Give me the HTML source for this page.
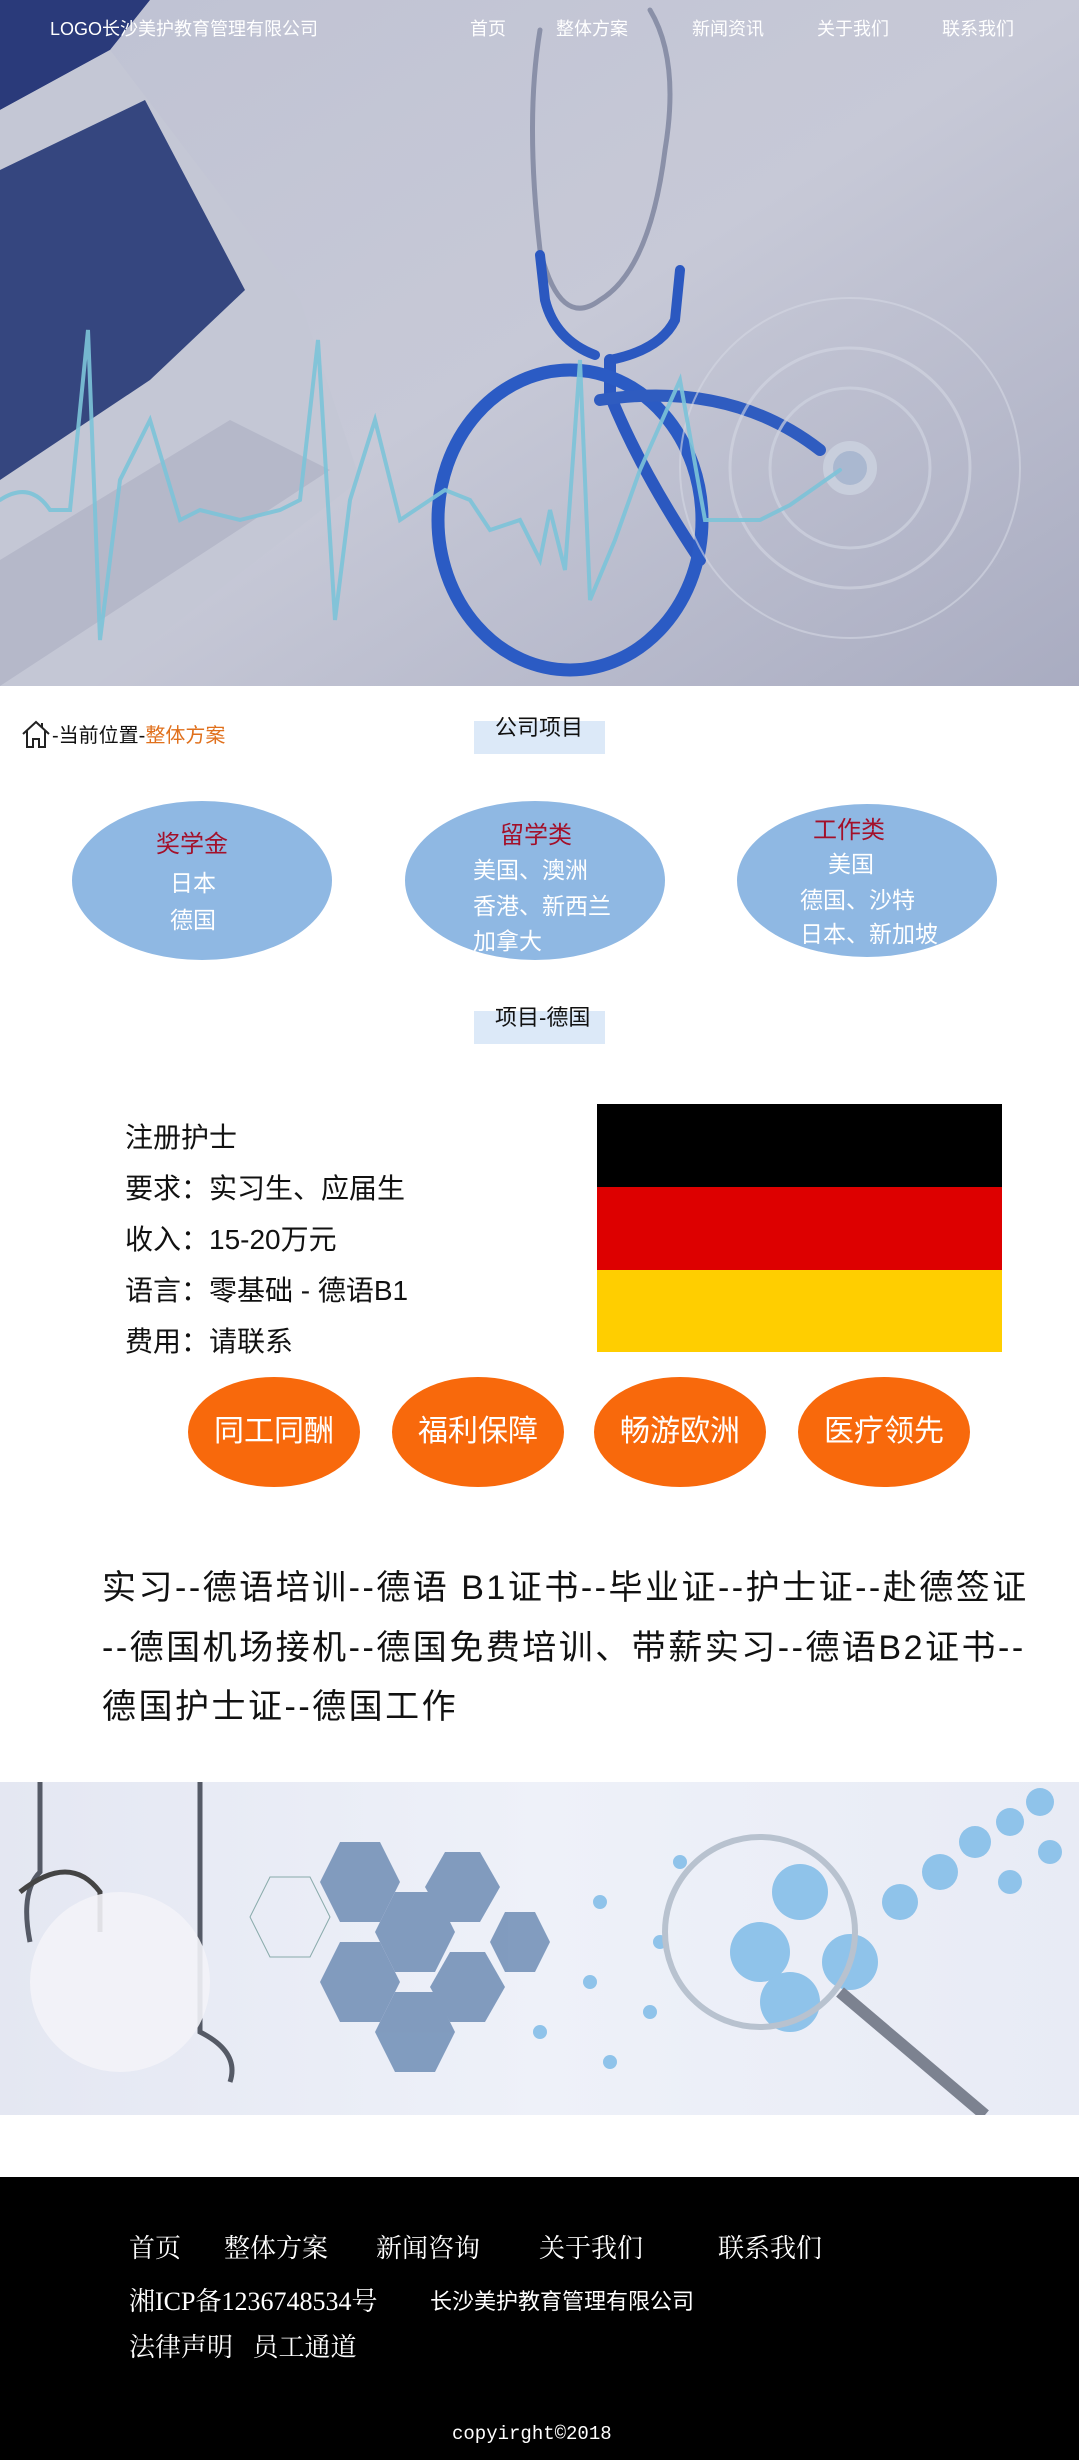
<!DOCTYPE html>
<html><head><meta charset="utf-8"><style>
*{margin:0;padding:0;box-sizing:border-box}
body{width:1079px;height:2460px;position:relative;background:#fff;font-family:"Liberation Sans","Noto Sans CJK SC",sans-serif;overflow:hidden}
.a{position:absolute;white-space:nowrap}
.nav{color:#fff;font-size:18px;top:15px}
.ell{position:absolute;background:#8fb8e3;border-radius:50%}
.t{color:#a3102a;font-size:24px}
.w{color:#fff;font-size:23px}
.box{position:absolute;background:#dce9f8;width:131px;height:33px}
.info{left:125px;font-size:28px;color:#111}
.oc{position:absolute;top:1377px;width:172px;height:110px;border-radius:50%;background:#f8690c;color:#fff;font-size:30px;text-align:center;line-height:110px}
.para{left:102px;font-size:34px;letter-spacing:2.5px;color:#111}
.ft{color:#fff;font-size:26px;font-family:"Liberation Serif","Noto Serif CJK SC",serif}
</style></head><body>
<!-- hero -->
<svg class="a" style="left:0;top:0" width="1079" height="686" viewBox="0 0 1079 686">
<defs><linearGradient id="bg" x1="0" y1="0" x2="1" y2="1"><stop offset="0" stop-color="#bfc2d3"/><stop offset="0.5" stop-color="#c7c9d7"/><stop offset="1" stop-color="#a9acc1"/></linearGradient></defs>
<rect width="1079" height="686" fill="url(#bg)"/>
<polygon points="0,0 150,0 110,50 0,110" fill="#2a3a7a"/>
<polygon points="0,110 110,50 300,300 360,480 0,760" fill="#c4c7d5"/>
<polygon points="0,170 145,100 245,290 150,380 0,480" fill="#35467f"/>
<polygon points="0,560 230,420 330,470 0,686" fill="#b5b8c9"/>
<g fill="none" stroke-linecap="round">
<path d="M540 30 Q525 120 540 250 Q560 330 600 300 Q650 270 665 150 Q680 60 650 10" stroke="#8a90a8" stroke-width="5"/>
<path d="M540 255 L545 300 Q555 340 595 355" stroke="#2b58c0" stroke-width="10"/>
<path d="M680 270 L675 320 Q660 350 610 360" stroke="#2b58c0" stroke-width="10"/>
<path d="M610 360 L610 395 Q640 470 700 560" stroke="#2b58c0" stroke-width="12"/>
<ellipse cx="570" cy="520" rx="132" ry="150" stroke="#2b5bc4" stroke-width="13"/>
<path d="M600 400 Q730 380 820 450" stroke="#2f5cc0" stroke-width="12"/>
<circle cx="850" cy="468" r="22" stroke="#c8cedc" stroke-width="10" fill="#aab8d0"/>
<circle cx="850" cy="468" r="80" stroke="#cfd3e0" stroke-width="3" opacity=".7"/>
<circle cx="850" cy="468" r="120" stroke="#d4d7e3" stroke-width="3" opacity=".6"/>
<circle cx="850" cy="468" r="170" stroke="#d4d7e3" stroke-width="2" opacity=".6"/>
<path d="M0 500 Q30 480 50 510 L70 510 L88 330 L100 640 L120 480 L150 420 L180 520 L200 510 L240 520 L280 510 L300 500 L318 340 L335 620 L350 500 L375 420 L400 520 L430 500 L445 490 L470 500 L490 530 L520 520 L540 560 L550 510 L565 570 L580 360 L590 600 L615 540 L640 470 L680 380 L705 520 L760 520 L790 505 L840 470" stroke="#7cc3d8" stroke-width="4" opacity=".9"/>
</g>
</svg>
<div class="a nav" style="left:50px">LOGO长沙美护教育管理有限公司</div>
<div class="a nav" style="left:470px">首页</div>
<div class="a nav" style="left:556px">整体方案</div>
<div class="a nav" style="left:692px">新闻资讯</div>
<div class="a nav" style="left:817px">关于我们</div>
<div class="a nav" style="left:942px">联系我们</div>

<!-- breadcrumb -->
<svg class="a" style="left:20px;top:718px" width="32" height="32" viewBox="0 0 32 32"><path d="M3 16 L16 4 L29 16 M7 13 V29 H13 V21 H19 V29 H25 V13 M22 5 V9" fill="none" stroke="#222" stroke-width="2"/></svg>
<div class="a" style="left:52px;top:719px;font-size:20px;color:#111">-当前位置-<span style="color:#e0701c">整体方案</span></div>

<div class="box" style="left:474px;top:721px"></div>
<div class="a" style="left:495px;top:710px;font-size:22px;color:#111">公司项目</div>

<div class="ell" style="left:72px;top:801px;width:260px;height:159px"></div>
<div class="ell" style="left:405px;top:801px;width:260px;height:159px"></div>
<div class="ell" style="left:737px;top:804px;width:260px;height:153px"></div>
<div class="a t" style="left:156px;top:824px">奖学金</div>
<div class="a w" style="left:170px;top:864px">日本</div>
<div class="a w" style="left:170px;top:901px">德国</div>
<div class="a t" style="left:500px;top:815px">留学类</div>
<div class="a w" style="left:473px;top:851px">美国、澳洲</div>
<div class="a w" style="left:473px;top:887px">香港、新西兰</div>
<div class="a w" style="left:473px;top:922px">加拿大</div>
<div class="a t" style="left:813px;top:810px">工作类</div>
<div class="a w" style="left:828px;top:845px">美国</div>
<div class="a w" style="left:800px;top:881px">德国、沙特</div>
<div class="a w" style="left:800px;top:915px">日本、新加坡</div>

<div class="box" style="left:474px;top:1011px"></div>
<div class="a" style="left:495px;top:1000px;font-size:22px;color:#111">项目-德国</div>

<div class="a info" style="top:1116px">注册护士</div>
<div class="a info" style="top:1167px">要求：实习生、应届生</div>
<div class="a info" style="top:1218px">收入：15-20万元</div>
<div class="a info" style="top:1269px">语言：零基础 - 德语B1</div>
<div class="a info" style="top:1320px">费用：请联系</div>

<div class="a" style="left:597px;top:1104px;width:405px;height:83px;background:#000"></div>
<div class="a" style="left:597px;top:1187px;width:405px;height:83px;background:#dd0000"></div>
<div class="a" style="left:597px;top:1270px;width:405px;height:82px;background:#ffce00"></div>

<div class="oc" style="left:188px">同工同酬</div>
<div class="oc" style="left:392px">福利保障</div>
<div class="oc" style="left:594px">畅游欧洲</div>
<div class="oc" style="left:798px">医疗领先</div>

<div class="a para" style="top:1560px">实习--德语培训--德语 B1证书--毕业证--护士证--赴德签证</div>
<div class="a para" style="top:1620px">--德国机场接机--德国免费培训、带薪实习--德语B2证书--</div>
<div class="a para" style="top:1679px">德国护士证--德国工作</div>

<!-- lower image -->
<svg class="a" style="left:0;top:1782px" width="1079" height="333" viewBox="0 0 1079 333">
<defs><linearGradient id="g2" x1="0" x2="1"><stop offset="0" stop-color="#e4e7f2"/><stop offset=".5" stop-color="#eef1f9"/><stop offset="1" stop-color="#e8ebf5"/></linearGradient></defs>
<rect width="1079" height="333" fill="url(#g2)"/>
<path d="M40 0 V90 Q20 110 30 160 M200 0 V250 Q240 270 230 300" stroke="#555a66" stroke-width="5" fill="none"/>
<path d="M20 110 Q70 70 100 110 L100 150" stroke="#444" stroke-width="5" fill="none"/>
<ellipse cx="120" cy="200" rx="90" ry="90" fill="#f3f3f8" opacity=".9"/>
<g fill="#6f8db5" opacity=".85">
<polygon points="340,60 380,60 400,100 380,140 340,140 320,100"/>
<polygon points="340,160 380,160 400,200 380,240 340,240 320,200"/>
<polygon points="395,110 435,110 455,150 435,190 395,190 375,150"/>
<polygon points="395,210 435,210 455,250 435,290 395,290 375,250"/>
<polygon points="445,70 480,70 500,105 480,140 445,140 425,105"/>
<polygon points="450,170 485,170 505,205 485,240 450,240 430,205"/>
<polygon points="505,130 535,130 550,160 535,190 505,190 490,160"/>
</g>
<polygon points="270,95 310,95 330,135 310,175 270,175 250,135" fill="none" stroke="#8aa" stroke-width="1"/>
<g fill="#8fc3ea">
<circle cx="800" cy="110" r="28"/><circle cx="760" cy="170" r="30"/><circle cx="790" cy="220" r="30"/><circle cx="850" cy="180" r="28"/><circle cx="900" cy="120" r="18"/><circle cx="940" cy="90" r="18"/><circle cx="975" cy="60" r="16"/><circle cx="1010" cy="40" r="14"/><circle cx="1040" cy="20" r="14"/><circle cx="1050" cy="70" r="12"/><circle cx="1010" cy="100" r="12"/>
<circle cx="600" cy="120" r="7"/><circle cx="590" cy="200" r="7"/><circle cx="610" cy="280" r="7"/><circle cx="650" cy="230" r="7"/><circle cx="660" cy="160" r="7"/><circle cx="680" cy="80" r="7"/><circle cx="540" cy="250" r="7"/>
</g>
<circle cx="760" cy="150" r="95" fill="none" stroke="#b8c2cf" stroke-width="6"/>
<line x1="840" y1="210" x2="985" y2="333" stroke="#7c8290" stroke-width="12"/>
</svg>

<!-- footer -->
<div class="a" style="left:0;top:2177px;width:1079px;height:283px;background:#000"></div>
<div class="a ft" style="left:129px;top:2228px">首页</div>
<div class="a ft" style="left:224px;top:2228px">整体方案</div>
<div class="a ft" style="left:376px;top:2228px">新闻咨询</div>
<div class="a ft" style="left:539px;top:2228px">关于我们</div>
<div class="a ft" style="left:718px;top:2228px">联系我们</div>
<div class="a ft" style="left:129px;top:2281px">湘ICP备1236748534号</div>
<div class="a" style="left:430px;top:2284px;color:#fff;font-size:22px">长沙美护教育管理有限公司</div>
<div class="a ft" style="left:129px;top:2327px">法律声明&nbsp;&nbsp;&nbsp;员工通道</div>
<div class="a" style="left:452px;top:2423px;color:#fff;font-size:19px;font-family:'Liberation Mono',monospace">copyirght©2018</div>
</body></html>
